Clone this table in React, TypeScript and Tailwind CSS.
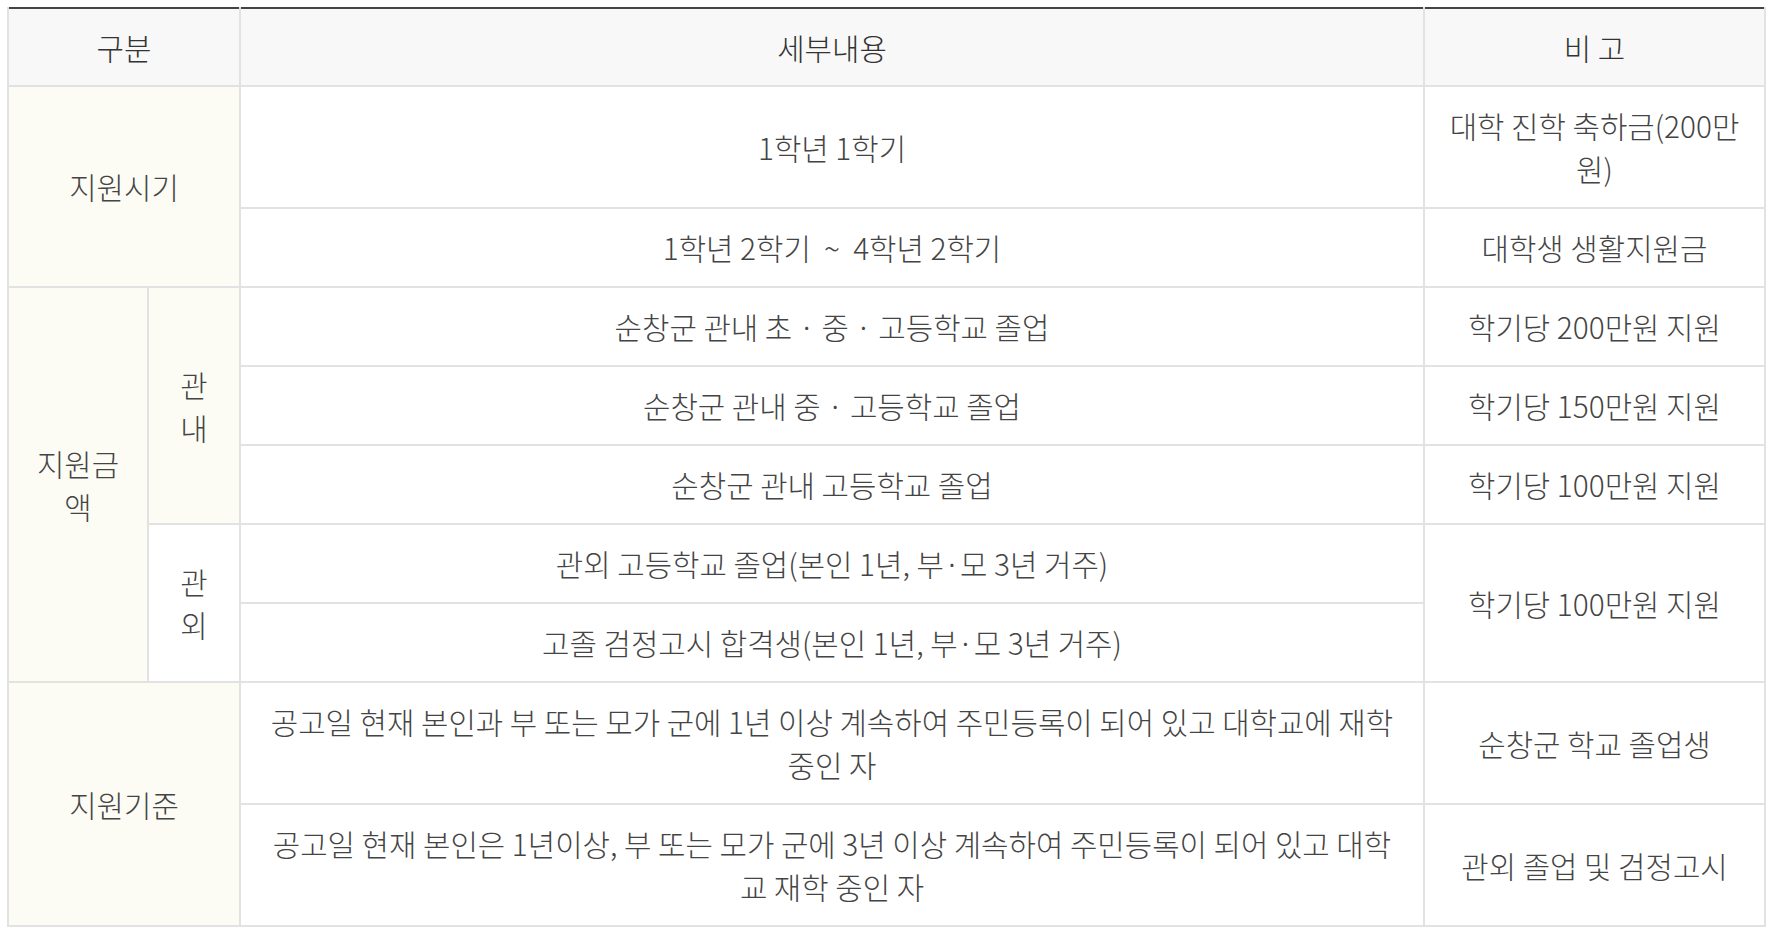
import React from "react";

// ─── cell styles ───────────────────────────────────────────────────────────
const head = "flex items-center justify-center text-center border-t-2 border-[#444444] bg-[#f8f8f8] text-[#333333] px-[22px]";
const label = "flex items-center justify-center text-center bg-[#fcfcf4] px-[22px]";
const cell = "flex items-center justify-center text-center bg-white px-[22px]";

export default function App() {
  return (
    <div
      className="min-h-[938px] bg-white pt-[7px] pl-[7px] text-[29.8px] font-light leading-[43px] text-[#444444]"
      style={{ fontFamily: '"Noto Sans CJK KR", "Noto Sans", sans-serif' }}
    >
      <div className="grid w-[1759px] grid-cols-[138px_90px_1182px_339px] grid-rows-[78px_120px_77px_77px_77px_77px_77px_77px_120px_120px] gap-[2px] bg-[#e2e2e2] px-[2px] pb-[2px]">
        {/* ── Header ── */}
        <div className={`${head} col-start-1 col-span-2 row-start-1`}>구분</div>
        <div className={`${head} col-start-3 row-start-1`}>세부내용</div>
        <div className={`${head} col-start-4 row-start-1`}>비 고</div>

        {/* ── 지원시기 ── */}
        <div className={`${label} col-start-1 col-span-2 row-start-2 row-span-2`}>지원시기</div>
        <div className={`${cell} col-start-3 row-start-2`}>1학년 1학기</div>
        <div className={`${cell} col-start-4 row-start-2`}>대학 진학 축하금(200만원)</div>
        <div className={`${cell} col-start-3 row-start-3`}>1학년 2학기&nbsp; ~ &nbsp;4학년 2학기</div>
        <div className={`${cell} col-start-4 row-start-3`}>대학생 생활지원금</div>

        {/* ── 지원금액 ── */}
        <div className={`${label} col-start-1 row-start-4 row-span-5`}>지원금액</div>
        <div className={`${label} col-start-2 row-start-4 row-span-3`}>관내</div>
        <div className={`${cell} col-start-3 row-start-4`}>순창군 관내 초 · 중 · 고등학교 졸업</div>
        <div className={`${cell} col-start-4 row-start-4`}>학기당 200만원 지원</div>
        <div className={`${cell} col-start-3 row-start-5`}>순창군 관내 중 · 고등학교 졸업</div>
        <div className={`${cell} col-start-4 row-start-5`}>학기당 150만원 지원</div>
        <div className={`${cell} col-start-3 row-start-6`}>순창군 관내 고등학교 졸업</div>
        <div className={`${cell} col-start-4 row-start-6`}>학기당 100만원 지원</div>

        <div className={`${cell} col-start-2 row-start-7 row-span-2`}>관외</div>
        <div className={`${cell} col-start-3 row-start-7`}>관외 고등학교 졸업(본인 1년, 부·모 3년 거주)</div>
        <div className={`${cell} col-start-4 row-start-7 row-span-2`}>학기당 100만원 지원</div>
        <div className={`${cell} col-start-3 row-start-8`}>고졸 검정고시 합격생(본인 1년, 부·모 3년 거주)</div>

        {/* ── 지원기준 ── */}
        <div className={`${label} col-start-1 col-span-2 row-start-9 row-span-2`}>지원기준</div>
        <div className={`${cell} col-start-3 row-start-9`}>
          공고일 현재 본인과 부 또는 모가 군에 1년 이상 계속하여 주민등록이 되어 있고 대학교에 재학 중인 자
        </div>
        <div className={`${cell} col-start-4 row-start-9`}>순창군 학교 졸업생</div>
        <div className={`${cell} col-start-3 row-start-10`}>
          공고일 현재 본인은 1년이상, 부 또는 모가 군에 3년 이상 계속하여 주민등록이 되어 있고 대학교 재학 중인 자
        </div>
        <div className={`${cell} col-start-4 row-start-10`}>관외 졸업 및 검정고시</div>
      </div>
    </div>
  );
}
